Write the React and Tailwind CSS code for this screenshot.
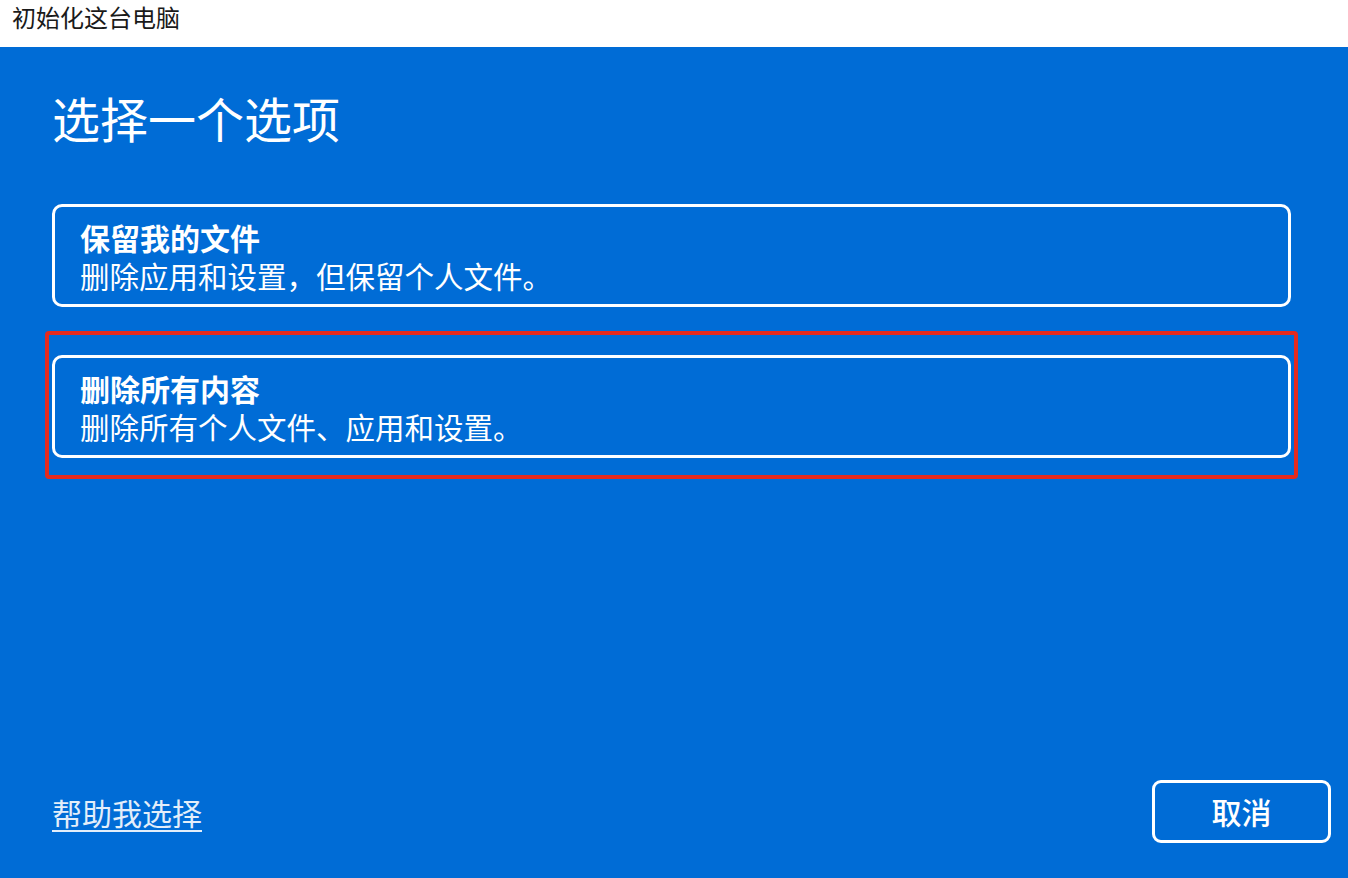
import React from "react";

const font = { fontFamily: '"Noto Sans CJK SC", "Noto Sans", sans-serif' };

function Option({ title, desc }) {
  return (
    <div className="rounded-[10px] border-[3px] border-white pl-[25px] pt-[11px] pb-[10px]">
      <div className="text-[30px] font-bold leading-[38px] text-white">{title}</div>
      <div className="text-[29.5px] leading-[38px] text-white">{desc}</div>
    </div>
  );
}

export default function App() {
  return (
    <div className="flex h-[878px] w-[1348px] flex-col overflow-hidden" style={font}>
      <div className="h-[47px] bg-white pl-[12px] pt-[5px] text-[24px] leading-none text-[#1a1a1a]">
        初始化这台电脑
      </div>
      <div className="flex flex-1 flex-col bg-[#006cd6]">
        <div className="px-[52px] pr-[57px]">
          <h1 className="mt-[46px] text-[48px] font-normal leading-none text-white">选择一个选项</h1>
          <div className="mt-[63px]">
            <Option title="保留我的文件" desc="删除应用和设置，但保留个人文件。" />
          </div>
          <div className="-mx-[7px] mt-[24px] rounded-[4px] border-[4px] border-[#e42a1e] px-[3px] pt-[20px] pb-[17px]">
            <Option title="删除所有内容" desc="删除所有个人文件、应用和设置。" />
          </div>
        </div>
        <div className="mt-auto flex items-center justify-between pl-[52px] pr-[17px] pb-[35px]">
          <a className="text-[30px] leading-none text-[#e3eefa] underline underline-offset-[5px] decoration-[2px]">
            帮助我选择
          </a>
          <button className="flex h-[63px] w-[179px] items-center justify-center rounded-[9px] border-[3px] border-white text-[30px] font-medium text-white">
            取消
          </button>
        </div>
      </div>
    </div>
  );
}
